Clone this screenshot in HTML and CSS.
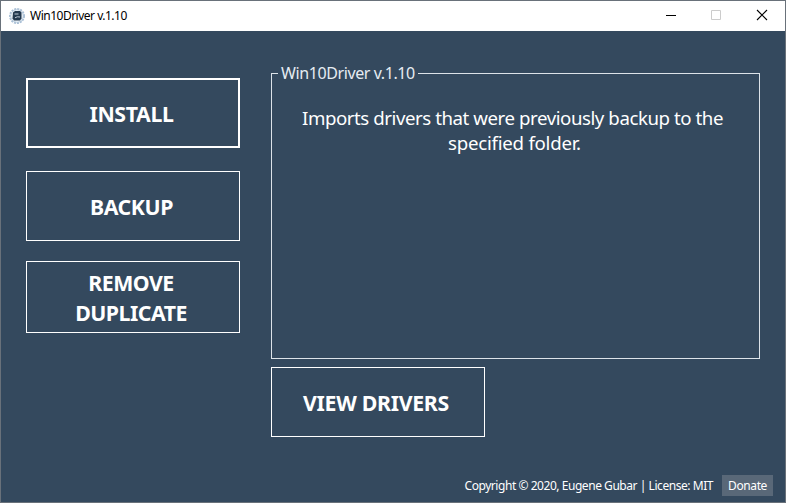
FILE: index.html
```
<!DOCTYPE html>
<html lang="en">
<head>
<meta charset="utf-8">
<title>Win10Driver v.1.10</title>
<link rel="stylesheet" href="styles.css">
</head>
<body>
<div class="window">
  <header class="titlebar">
    <svg class="app-icon" width="18" height="18" viewBox="0 0 18 18">
      <circle cx="9" cy="9" r="7" fill="#edf3f9" stroke="#a9bfd5" stroke-width="2" stroke-dasharray="2 1"/>
      <circle cx="9" cy="9" r="6.3" fill="none" stroke="#b9cbdc" stroke-width=".7"/>
      <path d="M5 5.500 7 4h5l1.500 1.500v6L12 13.500H6l-1.500-2z" fill="#22384e"/>
      <path d="M6.500 7h4M7 10.800l2.300-1 2.700.2" fill="none" stroke="#bdcbd8" stroke-width="1"/>
    </svg>
    <span class="title">Win10Driver v.1.10</span>
    <div class="controls">
      <svg width="46" height="30" viewBox="0 0 46 30"><path d="M17 14.500h10" stroke="#000"/></svg>
      <svg width="46" height="30" viewBox="0 0 46 30"><path d="M16.500 9.500h9v9h-9z" fill="none" stroke="#ccc"/></svg>
      <svg width="46" height="30" viewBox="0 0 46 30"><path d="m16 9 10 10m0-10L16 19" stroke="#000" stroke-width="1.100"/></svg>
    </div>
  </header>
  <main class="content">
    <nav class="actions">
      <button class="btn btn-default"><span>INSTALL</span></button>
      <button class="btn"><span>BACKUP</span></button>
      <button class="btn btn-tall"><span>REMOVE<br>DUPLICATE</span></button>
    </nav>
    <section class="details">
      <fieldset class="group">
        <legend>Win10Driver v.1.10</legend>
        <p>Imports drivers that were previously backup to the<br><span class="last">specified folder.</span></p>
      </fieldset>
      <button class="btn btn-view"><span>VIEW DRIVERS</span></button>
    </section>
  </main>
  <footer class="footer">
    <span class="copyright">Copyright © 2020, Eugene Gubar | License: MIT</span>
    <button class="donate">Donate</button>
  </footer>
</div>
</body>
</html>
```
FILE: styles.css
```
* { box-sizing: border-box; }
body { margin: 0; font-family: "Noto Sans", "Open Sans", sans-serif; font-variant-ligatures: none; }
button { font-family: inherit; color: #fff; margin: 0; padding: 0; }
.window { width: 786px; height: 503px; border: 1px solid #69717a; background: #34495e; display: flex; flex-direction: column; overflow: hidden; }
.titlebar { height: 30px; flex: none; background: #fff; display: flex; align-items: center; padding-left: 7px; }
.app-icon { margin-top: -1px; }
.title { margin-left: 4px; font-size: 12px; line-height: 16px; letter-spacing: -0.5px; color: #000; white-space: nowrap; }
.controls { display: flex; margin-left: auto; margin-right: -2px; }
.controls svg { display: block; }
.content { display: flex; padding-left: 25px; height: 443px; flex: none; }
.actions { width: 214px; padding-top: 47px; }
.btn { display: flex; align-items: center; justify-content: center; width: 214px; height: 70px; border: 1px solid #fff; background: none; font-size: 21.3px; font-weight: 700; line-height: 30px; letter-spacing: -0.4px; padding: 1px 3px 0 0; white-space: nowrap; margin-bottom: 23px; }
.btn-default { border-width: 2px; }
.btn:nth-child(2) { margin-bottom: 20px; }
.btn-tall { height: 72px; padding-top: 2px; padding-right: 4px; letter-spacing: -0.5px; }
.details { margin-left: 31px; padding-top: 31px; width: 489px; }
.group { margin: 0; height: 297px; padding: 0; border: 1px solid #dce3e9; min-width: 0; }
.group legend { margin-left: 6px; padding: 0 3px; font-size: 16px; line-height: 23px; letter-spacing: -0.4px; color: #e6ecf2; }
.group p { margin: 20px 0 0; padding-right: 6px; text-align: center; font-size: 18.67px; line-height: 25px; color: #fff; letter-spacing: -0.44px; white-space: nowrap; }
.last { padding-left: 4px; letter-spacing: -0.25px; }
.btn.btn-view { margin-top: 8px; padding-right: 4px; letter-spacing: -0.3px; }
.footer { display: flex; align-items: flex-start; justify-content: flex-end; padding-right: 12px; color: #fff; font-size: 12px; line-height: 23px; white-space: nowrap; }
.copyright { letter-spacing: -0.45px; margin-right: 9px; }
.donate { width: 51px; height: 21px; margin-top: 1px; border: 0; background: #596878; font-size: 12px; line-height: 21px; letter-spacing: -0.4px; }
```
